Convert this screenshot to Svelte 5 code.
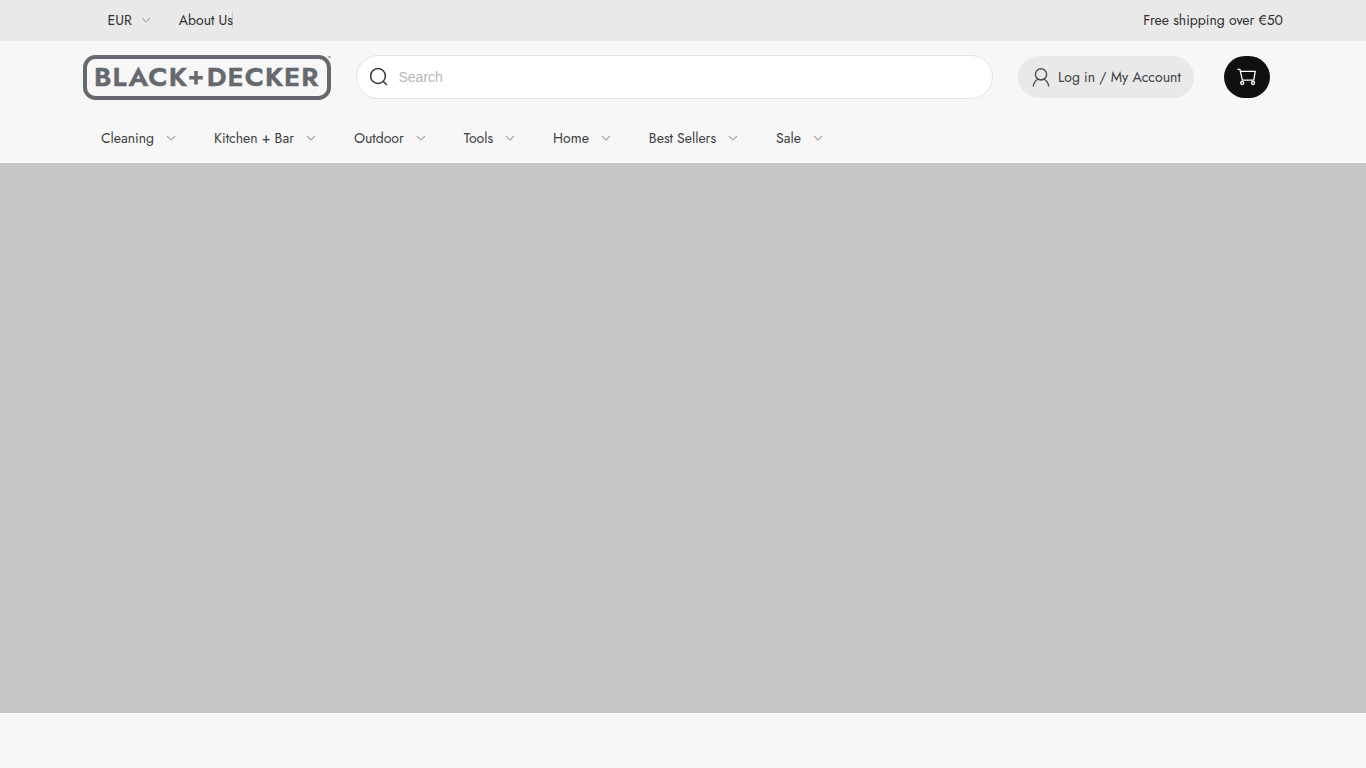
<script lang="ts">
	const navItems = [
		'Cleaning',
		'Kitchen + Bar',
		'Outdoor',
		'Tools',
		'Home',
		'Best Sellers',
		'Sale'
	];

	let search = $state('');
</script>

{#snippet chevron()}
	<svg class="chevron" width="10" height="6" viewBox="0 0 10 6" aria-hidden="true">
		<path d="M1 1l4 4 4-4" />
	</svg>
{/snippet}

<div class="page">
	<div class="topbar">
		<div class="container topbar-inner">
			<button class="currency"><span>EUR</span>{@render chevron()}</button>
			<a class="about" href="#about">About Us</a>
			<span class="shipping">Free shipping over €50</span>
		</div>
	</div>

	<header>
		<div class="container main-row">
			<a class="logo" href="#home" aria-label="BLACK+DECKER">
				<svg width="249" height="46" viewBox="0 0 249 46">
					<rect x="2" y="2" width="244" height="41" rx="10.5" />
					<text class="word" x="11" y="31.300" textLength="94" lengthAdjust="spacingAndGlyphs">BLACK</text>
					<path class="plus" d="M113 16v13.500M106.200 22.700h13.600" />
					<text class="word" x="123.800" y="31.300" textLength="112.500" lengthAdjust="spacingAndGlyphs">DECKER</text>
					<circle cx="246.500" cy="2" r="1.300" />
				</svg>
			</a>

			<label class="search">
				<svg width="18" height="18" viewBox="0 0 18 18" aria-hidden="true">
					<circle cx="8" cy="8" r="7.400" />
					<path d="M13.200 13.300l3.700 3.700" />
				</svg>
				<input type="text" placeholder="Search" bind:value={search} />
			</label>

			<a class="account" href="#account">
				<svg width="18" height="19" viewBox="0 0 18 19" aria-hidden="true">
					<circle cx="9" cy="6.400" r="5.600" />
					<path d="M1.300 18.500c.3-3.300 2-5.900 4.900-7.500M16.700 18.500c-.3-3.300-2-5.900-4.900-7.500" />
				</svg>
				<span>Log in / My Account</span>
			</a>

			<a class="cart" href="#cart" aria-label="Cart">
				<svg width="20" height="18" viewBox="0 0 20 18" aria-hidden="true">
					<path d="M.5 1.300h2.400l2.500 10.900h11.400L18.200 3.300H3.600" />
					<circle cx="5.200" cy="15" r="1.500" />
					<circle cx="16" cy="15" r="1.500" />
				</svg>
			</a>
		</div>

		<nav class="container">
			{#each navItems as item (item)}
				<a href="#{item}">
					<span>{item}</span>
					{@render chevron()}
				</a>
			{/each}
		</nav>
	</header>

	<main class="hero"></main>
</div>

<style>
	:global(body) {
		background: #f7f7f7;
		overflow: hidden;
	}

	.page {
		height: 768px;
		background: #f7f7f7;
		color: #3b3e42;
		font-family: Jost, Lato, sans-serif;
		font-size: 14px;
	}

	.container {
		box-sizing: border-box;
		width: 1200px;
		margin: 0 auto;
	}

	a {
		color: inherit;
		text-decoration: none;
	}

	span {
		white-space: nowrap;
	}

	.chevron {
		flex: none;
		fill: none;
		stroke: #aaa;
		stroke-width: 1.2;
	}

	.topbar {
		height: 41px;
		background: #e9e9e9;
		color: #303030;
	}

	.topbar-inner {
		display: flex;
		align-items: center;
		height: 40px;
		padding-left: 24.5px;
	}

	.currency {
		display: flex;
		align-items: center;
		gap: 9px;
		padding: 0;
		border: 0;
		background: none;
		color: inherit;
		font: inherit;
	}

	.currency .chevron {
		stroke: #b5b5b5;
	}

	.about {
		box-sizing: border-box;
		width: 54px;
		height: 16px;
		margin-left: 28px;
		border-right: 1px solid #ccc;
		line-height: 16px;
		white-space: nowrap;
	}

	.shipping {
		margin-left: auto;
	}

	.main-row {
		display: flex;
		align-items: center;
		height: 72px;
	}

	.logo {
		width: 249px;
		height: 46px;
		margin-top: 2px;
	}

	.logo svg {
		display: block;
	}

	.logo rect {
		fill: none;
		stroke: #65696e;
		stroke-width: 4;
	}

	.logo circle {
		fill: #a5a8ab;
	}

	.word {
		fill: #65696e;
		stroke: #65696e;
		stroke-width: 0.5;
		font: 600 25.5px Jost, Lato, sans-serif;
		letter-spacing: 1px;
	}

	.plus {
		fill: none;
		stroke: #65696e;
		stroke-width: 3.6;
	}

	.search {
		display: flex;
		align-items: center;
		box-sizing: border-box;
		width: 637px;
		height: 44px;
		margin-left: 24px;
		padding-left: 13px;
		border: 1px solid #e3e3e3;
		border-radius: 22px;
		background: #fff;
	}

	.search svg {
		flex: none;
		fill: none;
		stroke: #36393c;
		stroke-width: 1.5;
	}

	.search input {
		flex: 1;
		margin-left: 10.5px;
		padding: 0;
		border: 0;
		outline: 0;
		background: none;
		font: 14px 'Liberation Sans', Arial, sans-serif;
	}

	.search input::placeholder {
		color: #b8b8b8;
	}

	.account {
		display: flex;
		align-items: center;
		box-sizing: border-box;
		width: 176px;
		height: 42px;
		margin-left: 25px;
		padding-left: 14px;
		border-radius: 21px;
		background: #e9e9e9;
	}

	.account svg {
		flex: none;
		fill: none;
		stroke: #484b4f;
		stroke-width: 1.4;
	}

	.account span {
		margin-left: 8px;
	}

	.cart {
		display: flex;
		align-items: center;
		justify-content: center;
		width: 46px;
		height: 42px;
		margin-left: 30px;
		border-radius: 21px;
		background: #101010;
	}

	.cart svg {
		fill: none;
		stroke: #fff;
		stroke-width: 1.3;
	}

	nav {
		display: flex;
		align-items: center;
		gap: 38px;
		height: 50px;
		padding-left: 18px;
	}

	nav a {
		display: flex;
		align-items: center;
		gap: 12px;
	}

	.hero {
		height: 550px;
		background: #c6c6c6;
	}
</style>
